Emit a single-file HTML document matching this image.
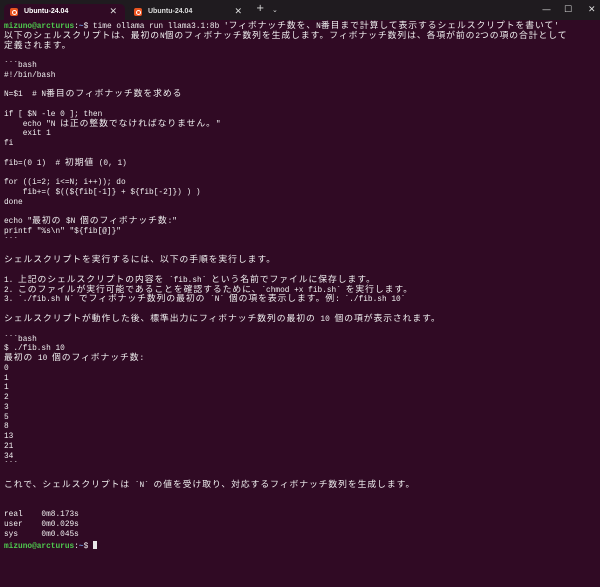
<!DOCTYPE html>
<html><head><meta charset="utf-8"><style>
html,body{margin:0;padding:0}
body{width:600px;height:587px;background:#300a24;overflow:hidden;position:relative;font-family:"Liberation Mono","Noto Sans CJK JP",monospace}
.bar{position:absolute;left:0;top:0;width:600px;height:20px;background:#1f1b1f}
.tab{position:absolute;top:4px;height:16px;border-radius:5px 5px 0 0;font-family:"Liberation Sans",sans-serif;font-size:7px;color:#fff;font-weight:bold}
.tab .ic{position:absolute;left:6px;top:4px;width:8px;height:8px;background:#e95420;border-radius:2px}
.tab .ic:after{content:"";position:absolute;left:2px;top:2px;width:3px;height:3px;border:0.8px solid #fff;border-radius:50%}
.tab .t{position:absolute;left:20px;top:4px}
.tab .x{position:absolute;right:8px;top:2px;font-size:9px;font-weight:normal;color:#ddd}
.ctl{position:absolute;top:5px;color:#ddd;font-family:"DejaVu Sans",sans-serif;font-size:9px}
pre{position:absolute;left:4px;top:23px;margin:0;font-size:7.8px;line-height:9.76px;color:#f0f0f0;font-family:"Liberation Mono","Noto Sans CJK JP",monospace}
.j{font-size:8.8px;letter-spacing:0.95px;line-height:0}
.g{color:#4ec94e;font-weight:bold}.b{color:#6b8fd6;font-weight:bold}
.cur{display:inline-block;width:4px;height:8px;background:#e8e8e8;vertical-align:-1px}
</style></head><body>
<div class="bar"></div>
<div class="tab" style="left:4px;width:121px;background:#300a24"><div class="ic"></div><span class="t">Ubuntu-24.04</span><span class="x">✕</span></div>
<div class="tab" style="left:128px;width:122px;background:#1f1b1f;color:#ddd"><div class="ic"></div><span class="t">Ubuntu-24.04</span><span class="x">✕</span></div>
<div class="ctl" style="left:256px;font-size:10px;top:3px">+</div>
<div class="ctl" style="left:272px;font-size:7px;top:6px">⌄</div>
<div class="ctl" style="left:542px">—</div>
<div class="ctl" style="left:564px">☐</div>
<div class="ctl" style="left:588px">✕</div>
<pre><span class="g">mizuno@arcturus</span>:<span class="b">~</span>$ time ollama run llama3.1:8b '<span class="j">フィボナッチ数を、</span>N<span class="j">番目まで計算して表示するシェルスクリプトを書いて</span>'
<span class="j">以下のシェルスクリプトは、最初の</span>N<span class="j">個のフィボナッチ数列を生成します。フィボナッチ数列は、各項が前の</span>2<span class="j">つの項の合計として</span>
<span class="j">定義されます。</span>

&#96;&#96;&#96;bash
#!/bin/bash

N=$1  # N<span class="j">番目のフィボナッチ数を求める</span>

if [ $N -le 0 ]; then
    echo "N <span class="j">は正の整数でなければなりません。</span>"
    exit 1
fi

fib=(0 1)  # <span class="j">初期値</span> (0, 1)

for ((i=2; i&lt;=N; i++)); do
    fib+=( $((${fib[-1]} + ${fib[-2]}) ) )
done

echo "<span class="j">最初の</span> $N <span class="j">個のフィボナッチ数</span>:"
printf "%s\n" "${fib[@]}"
&#96;&#96;&#96;

<span class="j">シェルスクリプトを実行するには、以下の手順を実行します。</span>

1. <span class="j">上記のシェルスクリプトの内容を</span> &#96;fib.sh&#96; <span class="j">という名前でファイルに保存します。</span>
2. <span class="j">このファイルが実行可能であることを確認するために、</span>&#96;chmod +x fib.sh&#96; <span class="j">を実行します。</span>
3. &#96;./fib.sh N&#96; <span class="j">でフィボナッチ数列の最初の</span> &#96;N&#96; <span class="j">個の項を表示します。例</span>: &#96;./fib.sh 10&#96;

<span class="j">シェルスクリプトが動作した後、標準出力にフィボナッチ数列の最初の</span> 10 <span class="j">個の項が表示されます。</span>

&#96;&#96;&#96;bash
$ ./fib.sh 10
<span class="j">最初の</span> 10 <span class="j">個のフィボナッチ数</span>:
0
1
1
2
3
5
8
13
21
34
&#96;&#96;&#96;

<span class="j">これで、シェルスクリプトは</span> &#96;N&#96; <span class="j">の値を受け取り、対応するフィボナッチ数列を生成します。</span>


real    0m8.173s
user    0m0.029s
sys     0m0.045s
<span class="g">mizuno@arcturus</span>:<span class="b">~</span>$ <span class="cur"></span></pre>
</body></html>
